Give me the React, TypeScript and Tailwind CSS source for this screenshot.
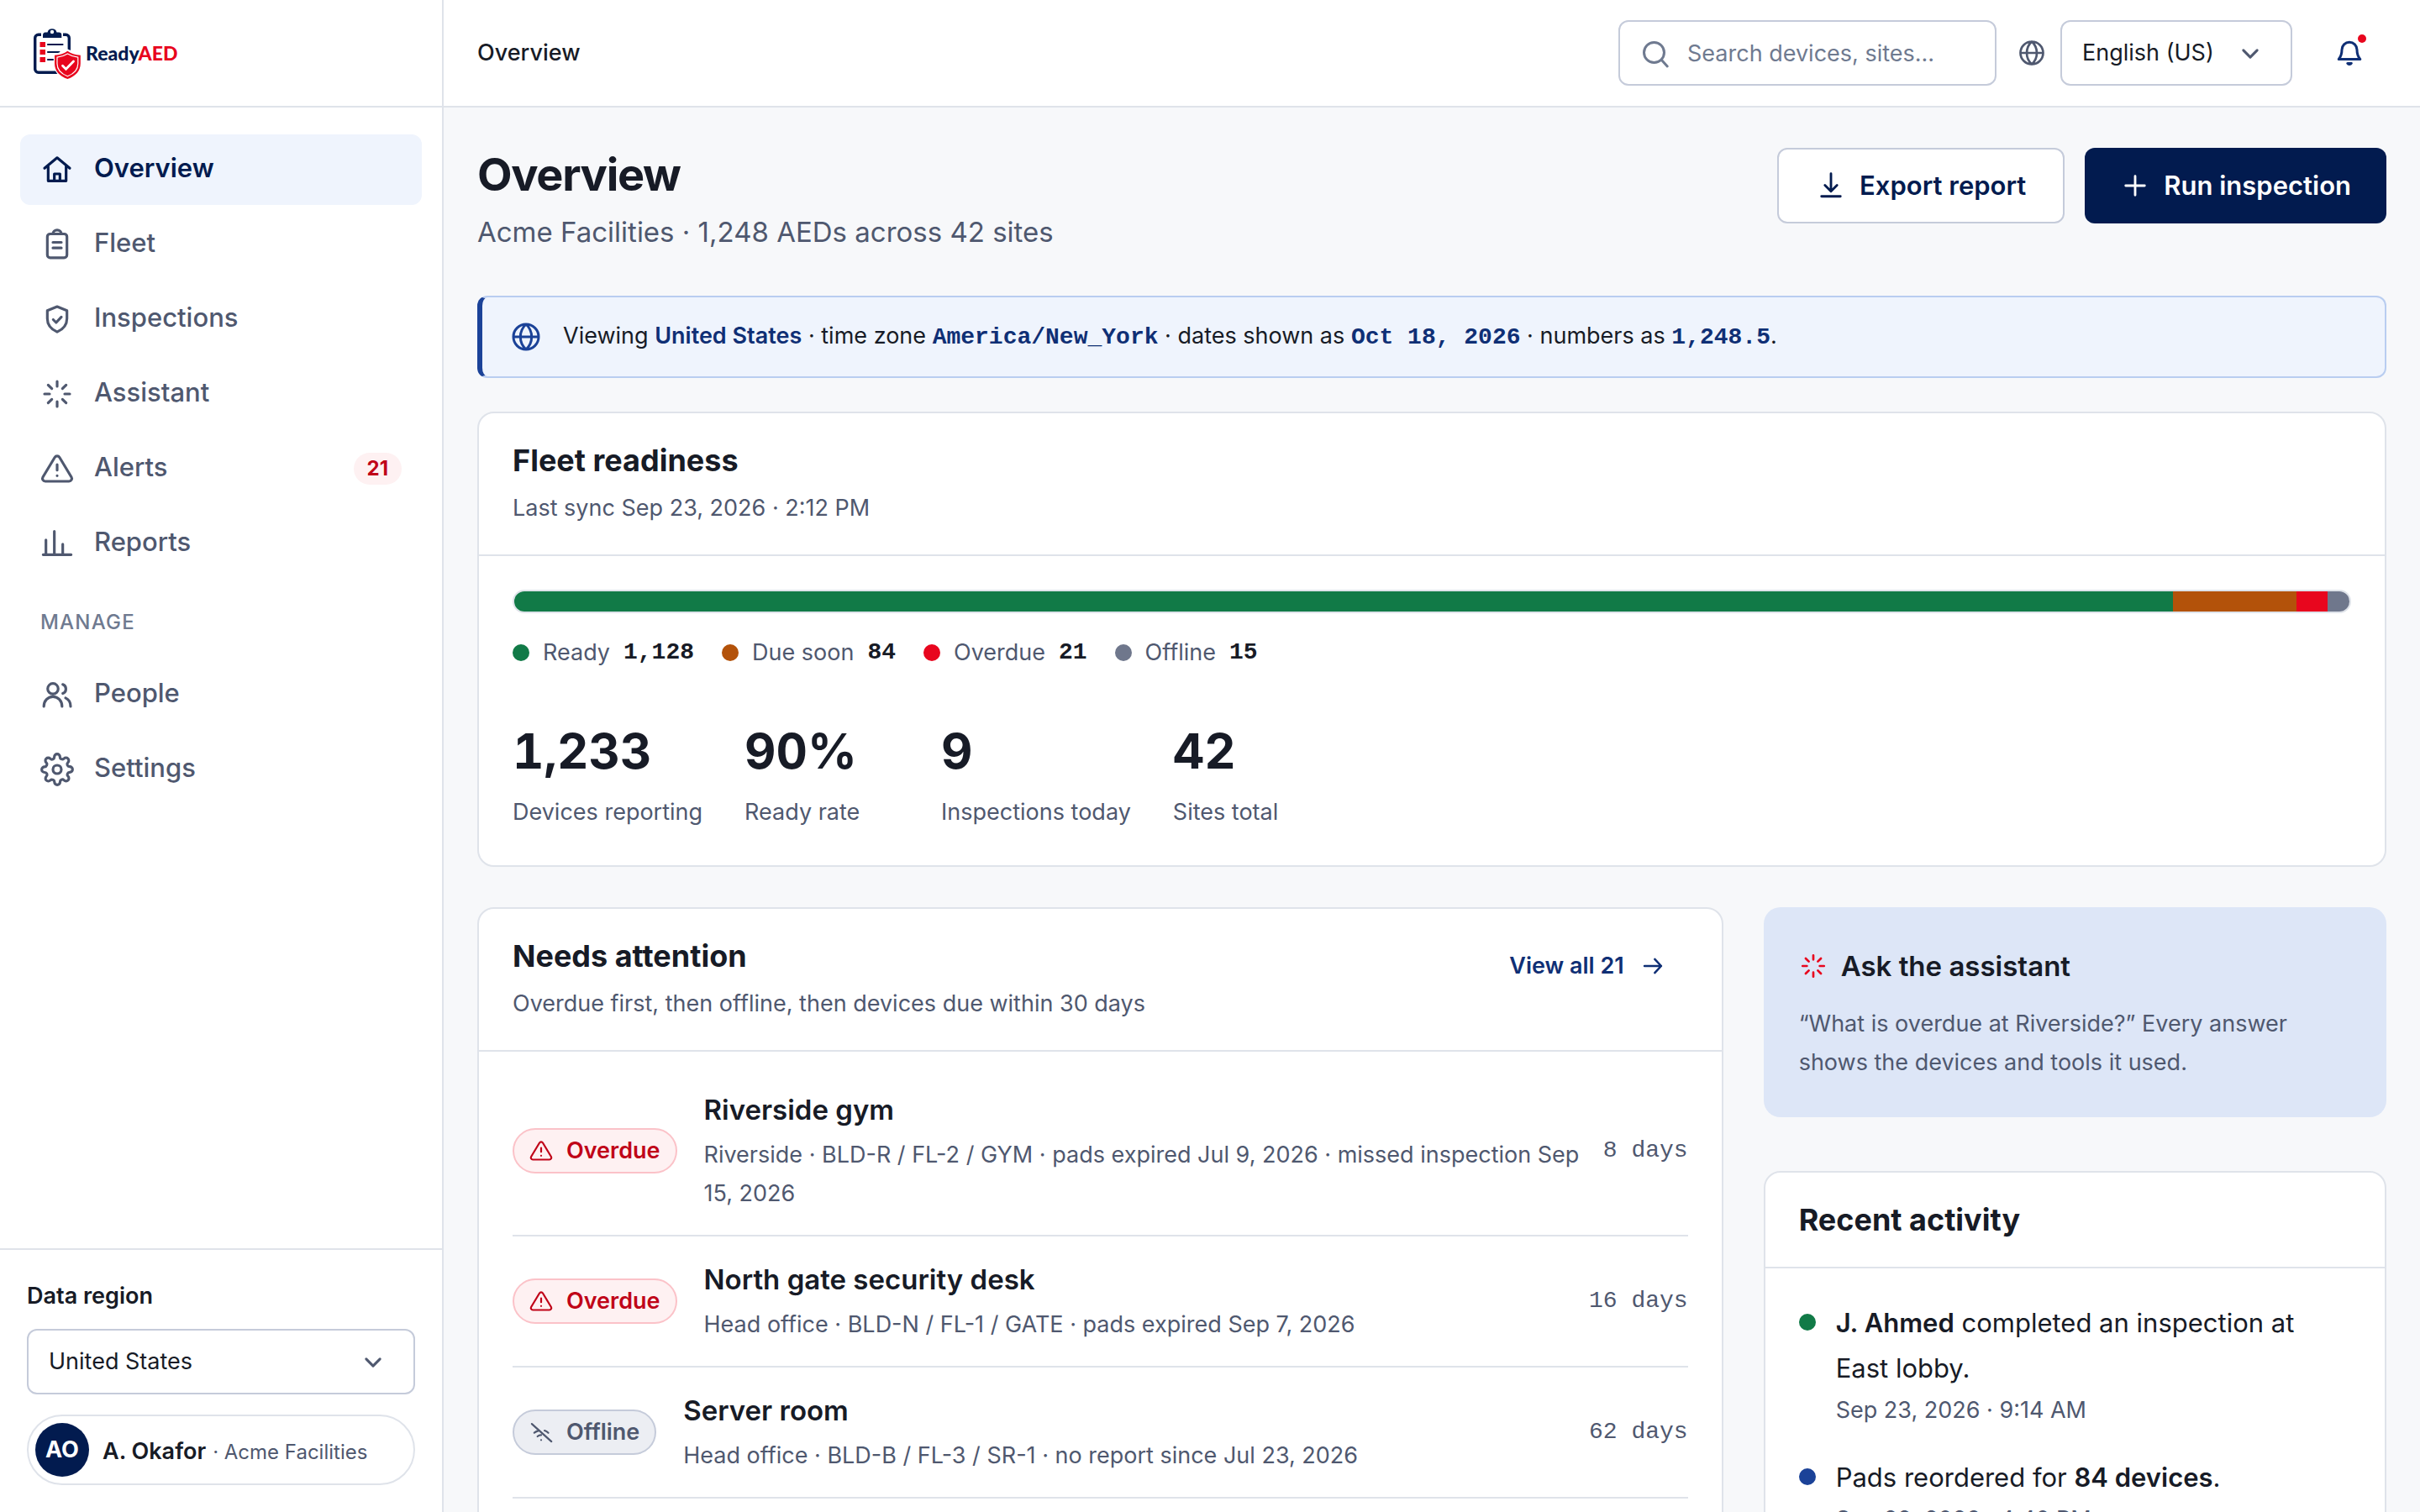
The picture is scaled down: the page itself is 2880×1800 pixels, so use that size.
import React from 'react';

const GEAR =
  'M19.4 15a1.65 1.65 0 0 0 .33 1.82l.06.06a2 2 0 0 1 0 2.83 2 2 0 0 1-2.83 0l-.06-.06a1.65 1.65 0 0 0-1.82-.33 1.65 1.65 0 0 0-1 1.51V21a2 2 0 0 1-2 2 2 2 0 0 1-2-2v-.09A1.65 1.65 0 0 0 9 19.4a1.65 1.65 0 0 0-1.82.33l-.06.06a2 2 0 0 1-2.83 0 2 2 0 0 1 0-2.83l.06-.06a1.65 1.65 0 0 0 .33-1.82 1.65 1.65 0 0 0-1.51-1H3a2 2 0 0 1-2-2 2 2 0 0 1 2-2h.09A1.65 1.65 0 0 0 4.6 9a1.65 1.65 0 0 0-.33-1.82l-.06-.06a2 2 0 0 1 0-2.83 2 2 0 0 1 2.83 0l.06.06a1.65 1.65 0 0 0 1.82.33H9a1.65 1.65 0 0 0 1-1.51V3a2 2 0 0 1 2-2 2 2 0 0 1 2 2v.09a1.65 1.65 0 0 0 1 1.51 1.65 1.65 0 0 0 1.82-.33l.06-.06a2 2 0 0 1 2.83 0 2 2 0 0 1 0 2.83l-.06.06a1.65 1.65 0 0 0-.33 1.82V9a1.65 1.65 0 0 0 1.51 1H21a2 2 0 0 1 2 2 2 2 0 0 1-2 2h-.09a1.65 1.65 0 0 0-1.51 1z';

const PATHS = {
  home: 'M3 11l9-7.5 9 7.5M5.6 9.5V20h12.8V9.5M10 20v-5h4v5',
  clipboard: 'M7 4.5h10a2 2 0 0 1 2 2v13a2 2 0 0 1-2 2H7a2 2 0 0 1-2-2v-13a2 2 0 0 1 2-2zM9 4.5a3 2.8 0 0 1 6 0M9 10.5h6M9 14.5h6',
  shield: 'M12 3l7 2.8v5.7c0 4.6-2.8 7.7-7 9.6-4.2-1.9-7-5-7-9.6V5.8zM9.2 12.3l2.1 2.1 3.7-4',
  spark: 'M12 3v3.6M12 17.4V21M3 12h3.6M17.4 12H21M5.6 5.6l2.6 2.6M15.8 15.8l2.6 2.6M5.6 18.4l2.6-2.6M15.8 8.2l2.6-2.6',
  alert: 'M10.3 3.9 1.8 18a2 2 0 0 0 1.7 3h17a2 2 0 0 0 1.7-3L13.7 3.9a2 2 0 0 0-3.4 0zM12 9v4M12 17h.01',
  chart: 'M2 20h20M4 20V9.5M10 20V3.3M16 20v-7.5',
  people: 'M9 4a3.6 3.6 0 1 1 0 7.5A3.6 3.6 0 1 1 9 4zM2.5 20.4c0-4 2.9-7 6.5-7s6.5 3 6.5 7M16 4.7a3.4 3.4 0 0 1 0 6.4M18 14.3c2.2 1 3.6 3.2 3.6 6.1',
  gear: 'M12 9a3 3 0 1 1 0 6 3 3 0 1 1 0-6z' + GEAR,
  search: 'M11 3a8 8 0 1 1 0 16 8 8 0 1 1 0-16zM17 17l4.5 5',
  globe: 'M12 3a9 9 0 1 1 0 18 9 9 0 1 1 0-18zM3 12h18M12 3c2.6 2.4 4 5.5 4 9s-1.4 6.6-4 9c-2.6-2.4-4-5.5-4-9s1.4-6.6 4-9z',
  bell: 'M6 9.5a6 6 0 0 1 12 0c0 4.2 1 5.7 2.5 7.5h-17C5 15.2 6 13.7 6 9.5zM10.5 20.3a1.6 1.2 0 0 0 3 0z',
  download: 'M12 2.5v14M7.2 11.7l4.8 4.8 4.8-4.8M4.5 20.5h15',
  plus: 'M12 4.5v15M4.5 12h15',
  arrow: 'M3.5 12h17M14 5l6.5 7-6.5 7',
  chevron: 'M5 8.5l7 7 7-7',
  offline: 'M2.5 3.5l20 18M5 12.6c1.3-1 2.8-1.8 4.5-2.2M15.5 10.3c1.5.5 2.8 1.3 3.8 2.3M8.3 16.3c1-.9 2.3-1.4 3.7-1.4M12 20h.01',
};

type IconProps = { name: keyof typeof PATHS; className?: string; stroke?: number };

const Icon: React.FC<IconProps> = ({ name, className = '', stroke = 1.9 }) => (
  <svg
    viewBox="0 0 24 24"
    fill="none"
    stroke="currentColor"
    strokeWidth={stroke}
    strokeLinecap="round"
    strokeLinejoin="round"
    className={`shrink-0 overflow-visible ${className}`}
    aria-hidden="true"
  >
    <path d={PATHS[name]} />
  </svg>
);

const Logo: React.FC = () => (
  <a href="#" className="flex items-center gap-[6px]">
    <svg viewBox="0 0 56 62" className="h-[62px] w-14" aria-hidden="true">
      <rect x="1.7" y="9.3" width="40.6" height="45" rx="4" fill="none" stroke="#021b4f" strokeWidth="3.4" />
      <path d="M9 6h26v8H9z" fill="#fff" />
      <path
        d="M14 6.5h2.5a5.7 5.7 0 0 1 11 0H30a3.3 3.3 0 0 1 3.3 3.3V13H11V9.8A3.3 3.3 0 0 1 14 6.5z"
        fill="#021b4f"
      />
      <circle cx="22" cy="6" r="2.2" fill="#fff" />
      <path d="M7.5 18H14v6H7.5zM7.5 27H14v6H7.5zM7.5 36H14v6H7.5z" fill="#e8061e" />
      <path d="M17 21h17.5M17 30h13.5M17 39h6" stroke="#021b4f" strokeWidth="2.2" strokeLinecap="round" />
      <path d="M40.4 26.5 57 33v11c0 9-6 16-16.6 20C29.8 60 24 53 24 44V33z" fill="#fff" />
      <path
        d="M40.4 28.7c4 3 9 4.6 15.4 5v9.8c0 9-6 15.3-15.4 18.5C31 58.8 25 52.5 25 43.5v-9.8c6.4-.4 11.4-2 15.4-5z"
        fill="#e8061e"
      />
      <path
        d="M40.4 32c3.6 2.3 7.6 3.7 12.4 4.2v7.5c0 7-4.6 12-12.4 15-7.8-3-12.4-8-12.4-15v-7.5c4.8-.5 8.8-1.9 12.4-4.2z"
        fill="none"
        stroke="#fff"
        strokeWidth="1.2"
      />
      <path d="M34.5 46.3l4 4L47.5 41" fill="none" stroke="#fff" strokeWidth="2.8" strokeLinecap="round" />
    </svg>
    <span className="font-[Lato] text-[23px] leading-none font-black text-[#021b4f]">
      Ready<span className="text-[#e8061e]">AED</span>
    </span>
  </a>
);

type NavItemProps = { icon: keyof typeof PATHS; label: string; active?: boolean; count?: number };

const NavItem: React.FC<NavItemProps> = ({ icon, label, active, count }) => (
  <a
    href="#"
    className={`flex h-[84px] items-center gap-6 rounded-xl px-6 text-[31px] ${
      active ? 'bg-[#eff4fd] font-semibold text-[#021b4f]' : 'font-medium text-[#4f586f]'
    }`}
  >
    <Icon name={icon} className="size-10" />
    <span className="flex-1 pb-1">{label}</span>
    {count && (
      <span className="flex h-[38px] items-center rounded-full bg-[#fef1f2] px-4 text-[24px] font-bold text-[#c00418]">
        {count}
      </span>
    )}
  </a>
);

const Sidebar: React.FC = () => (
  <aside className="flex w-[528px] shrink-0 flex-col border-r-2 border-[#dfe3ea] bg-white">
    <div className="flex h-32 shrink-0 items-center border-b-2 border-[#dfe3ea] px-10">
      <Logo />
    </div>
    <nav className="flex flex-1 flex-col gap-[5px] px-6 py-8">
      <NavItem icon="home" label="Overview" active />
      <NavItem icon="clipboard" label="Fleet" />
      <NavItem icon="shield" label="Inspections" />
      <NavItem icon="spark" label="Assistant" />
      <NavItem icon="alert" label="Alerts" count={21} />
      <NavItem icon="chart" label="Reports" />
      <p className="px-6 pt-6 pb-4 text-[24px] leading-[46px] font-medium tracking-wider text-[#6f7a90]">MANAGE</p>
      <NavItem icon="people" label="People" />
      <NavItem icon="gear" label="Settings" />
    </nav>
    <div className="flex flex-col border-t-2 border-[#dfe3ea] p-8">
      <label htmlFor="region" className="text-[27px] leading-[46px] font-semibold">
        Data region
      </label>
      <div className="relative mt-4">
        <select
          id="region"
          className="h-[78px] w-full appearance-none rounded-xl border-2 border-[#c5cbda] bg-white px-6 text-[27px]"
        >
          <option>United States</option>
        </select>
        <Icon name="chevron" className="absolute top-[26px] right-9 size-7 text-[#4f586f]" stroke={2.6} />
      </div>
      <button type="button" className="mt-6 flex h-[84px] items-center rounded-full border-2 border-[#dfe3ea] px-2">
        <span className="flex size-16 items-center justify-center rounded-full bg-[#021b4f] text-[27px] font-bold text-white">
          AO
        </span>
        <span className="ml-4 flex items-baseline gap-2 pt-1">
          <span className="text-[27px] font-semibold">A. Okafor</span>
          <span className="text-[24px] text-[#4f586f]">· Acme Facilities</span>
        </span>
      </button>
    </div>
  </aside>
);

const Topbar: React.FC = () => (
  <header className="flex h-32 shrink-0 items-center border-b-2 border-[#dfe3ea] bg-white px-10">
    <span className="flex-1 text-[27px] font-medium">Overview</span>
    <div className="relative">
      <Icon name="search" className="absolute top-[22px] left-[26px] size-9 text-[#6f7a90]" stroke={2} />
      <input
        type="search"
        aria-label="Search devices"
        placeholder="Search devices, sites..."
        className="h-[78px] w-[450px] rounded-xl border-2 border-[#c5cbda] bg-white pr-6 pl-20 text-[27px] placeholder:text-[#6f7a90]"
      />
    </div>
    <Icon name="globe" className="mr-4 ml-6 size-9 text-[#4f586f]" stroke={1.8} />
    <div className="relative">
      <select
        aria-label="Language"
        className="h-[78px] w-[276px] appearance-none rounded-xl border-2 border-[#c5cbda] bg-white px-6 text-[27px]"
      >
        <option>English (US)</option>
      </select>
      <Icon name="chevron" className="absolute top-[26px] right-9 size-7 text-[#4f586f]" stroke={2.6} />
    </div>
    <button type="button" aria-label="Notifications" className="relative ml-6 flex size-[88px] items-center justify-center">
      <Icon name="bell" className="size-9 text-[#0f2f75]" stroke={2} />
      <span className="absolute top-[22px] right-6 size-[10px] rounded-full bg-[#e8061e]"></span>
    </button>
  </header>
);

const Code: React.FC<{ children: React.ReactNode }> = ({ children }) => (
  <b className="font-['Liberation_Mono',monospace] text-[28px] font-bold text-[#0f2f75]">{children}</b>
);

type CardProps = { title: string; note?: string; action?: React.ReactNode; children: React.ReactNode };

const Card: React.FC<CardProps> = ({ title, note, action, children }) => (
  <section className="rounded-[20px] border-2 border-[#dfe3ea] bg-white">
    <div className="flex items-center justify-between border-b-2 border-[#dfe3ea] px-10 py-8">
      <div>
        <h2 className="text-[36px] leading-[48px] font-bold">{title}</h2>
        {note && <p className="mt-[10px] text-[27px] leading-[46px] text-[#4f586f]">{note}</p>}
      </div>
      {action}
    </div>
    {children}
  </section>
);

const SEGMENTS = [
  { label: 'Ready', value: 1128, color: 'bg-[#117a47]' },
  { label: 'Due soon', value: 84, color: 'bg-[#b3520a]' },
  { label: 'Overdue', value: 21, color: 'bg-[#e8061e]' },
  { label: 'Offline', value: 15, color: 'bg-[#6f778c]' },
];

const STATS = [
  { value: '1,233', label: 'Devices reporting' },
  { value: '90%', label: 'Ready rate' },
  { value: '9', label: 'Inspections today' },
  { value: '42', label: 'Sites total' },
];

const FleetReadiness: React.FC = () => (
  <Card title="Fleet readiness" note="Last sync Sep 23, 2026 · 2:12 PM">
    <div className="p-10">
      <div className="flex h-7 overflow-hidden rounded-full border-2 border-[#dfe3ea]">
        {SEGMENTS.map((s) => (
          <span key={s.label} className={s.color} style={{ width: `${(s.value / 1248) * 100}%` }}></span>
        ))}
      </div>
      <ul className="mt-6 flex gap-[33px] text-[27px] leading-[46px] text-[#4f586f]">
        {SEGMENTS.map((s) => (
          <li key={s.label} className="flex items-center gap-4">
            <span className={`size-5 rounded-full ${s.color}`}></span>
            {s.label}
            <b className="font-['Liberation_Mono',monospace] text-[28px] font-bold text-[#171b26]">
              {s.value.toLocaleString('en-US')}
            </b>
          </li>
        ))}
      </ul>
      <div className="mt-12 flex gap-[50px]">
        {STATS.map((s) => (
          <div key={s.label} className="min-w-[184px]">
            <p className="text-[58px] leading-[92px] font-bold tabular-nums">{s.value}</p>
            <p className="mt-1 text-[27px] leading-[46px] text-[#4f586f]">{s.label}</p>
          </div>
        ))}
      </div>
    </div>
  </Card>
);

const DEVICES = [
  {
    name: 'Riverside gym',
    detail: 'Riverside · BLD-R / FL-2 / GYM · pads expired Jul 9, 2026 · missed inspection Sep 15, 2026',
    age: '8 days',
    overdue: true,
  },
  {
    name: 'North gate security desk',
    detail: 'Head office · BLD-N / FL-1 / GATE · pads expired Sep 7, 2026',
    age: '16 days',
    overdue: true,
  },
  {
    name: 'Server room',
    detail: 'Head office · BLD-B / FL-3 / SR-1 · no report since Jul 23, 2026',
    age: '62 days',
    overdue: false,
  },
];

const StatusBadge: React.FC<{ overdue: boolean }> = ({ overdue }) => (
  <span
    className={`mr-2 flex h-[54px] shrink-0 items-center gap-4 rounded-full border-2 px-[18px] text-[27px] font-semibold ${
      overdue ? 'border-[#fbc2c8] bg-[#fef1f2] text-[#c00418]' : 'border-[#c5cbda] bg-[#eceef3] text-[#4f586f]'
    }`}
  >
    <Icon name={overdue ? 'alert' : 'offline'} className="size-7" />
    {overdue ? 'Overdue' : 'Offline'}
  </span>
);

const NeedsAttention: React.FC = () => (
  <Card
    title="Needs attention"
    note="Overdue first, then offline, then devices due within 30 days"
    action={
      <a href="#" className="mb-8 flex items-center gap-5 px-7 text-[27px] leading-[46px] font-semibold text-[#0f2f75]">
        View all 21
        <Icon name="arrow" className="size-7" stroke={2.2} />
      </a>
    }
  >
    <ul className="px-10 pt-[18px] pb-10">
      {DEVICES.map((d) => (
        <li key={d.name} className="flex items-center gap-6 border-b-2 border-[#dfe3ea] py-[26px]">
          <StatusBadge overdue={d.overdue} />
          <div className="min-w-0 flex-1">
            <h3 className="text-[33px] leading-[50px] font-semibold">{d.name}</h3>
            <p className="mt-[6px] text-[27px] leading-[46px] text-[#4f586f]">{d.detail}</p>
          </div>
          <span className="shrink-0 font-['Liberation_Mono',monospace] text-[28px] text-[#4f586f]">{d.age}</span>
        </li>
      ))}
    </ul>
  </Card>
);

type ActivityProps = { color: string; time: string; children: React.ReactNode };

const Activity: React.FC<ActivityProps> = ({ color, time, children }) => (
  <li className="flex gap-6">
    <span className={`mt-4 size-5 shrink-0 rounded-full ${color}`}></span>
    <div>
      <p className="text-[31px] leading-[54px]">{children}</p>
      <p className="text-[27px] leading-[46px] text-[#4f586f]">{time}</p>
    </div>
  </li>
);

const App: React.FC = () => {
  return (
    <div className="flex h-screen overflow-hidden bg-[#f7f8fa] font-[Inter,sans-serif] text-[#171b26]">
      <Sidebar />
      <div className="flex min-w-0 flex-1 flex-col">
        <Topbar />
        <main className="flex-1 overflow-hidden px-10 pt-12">
          <div className="flex items-start justify-between">
            <div>
              <h1 className="text-[54px] leading-[64px] font-bold tracking-tight">Overview</h1>
              <p className="mt-2 text-[33px] leading-[56px] text-[#4f586f]">
                Acme Facilities · 1,248 AEDs across 42 sites
              </p>
            </div>
            <div className="flex gap-6 text-[31px] font-semibold">
              <button
                type="button"
                className="flex h-[90px] items-center gap-4 rounded-xl border-2 border-[#c5cbda] bg-white px-11 text-[#021b4f]"
              >
                <Icon name="download" className="size-9" />
                Export report
              </button>
              <button type="button" className="flex h-[90px] items-center gap-4 rounded-xl bg-[#021b4f] px-[42px] text-white">
                <Icon name="plus" className="size-9" />
                Run inspection
              </button>
            </div>
          </div>

          <div className="mt-12 flex h-[98px] items-center gap-6 rounded-xl border-2 border-l-[6px] border-[#b9cdf0] border-l-[#1b4298] bg-[#eff4fd] px-8 text-[27px]">
            <Icon name="globe" className="size-10 text-[#1b4298]" stroke={1.8} />
            <p>
              Viewing <b className="font-semibold text-[#0f2f75]">United States</b> · time zone{' '}
              <Code>America/New_York</Code> · dates shown as <Code>Oct 18, 2026</Code> · numbers as{' '}
              <Code>1,248.5</Code>.
            </p>
          </div>

          <div className="mt-10">
            <FleetReadiness />
          </div>

          <div className="mt-12 grid grid-cols-[2fr_1fr] items-start gap-12">
            <NeedsAttention />
            <div className="flex flex-col gap-16">
              <section className="rounded-[20px] bg-[#dde6f7] p-[42px]">
                <div className="flex items-center gap-4">
                  <Icon name="spark" className="size-[34px] text-[#e8061e]" />
                  <h2 className="text-[33px] leading-[56px] font-semibold">Ask the assistant</h2>
                </div>
                <p className="mt-[18px] text-[27px] leading-[46px] text-[#4f586f]">
                  “What is overdue at Riverside?” Every answer shows the devices and tools it used.
                </p>
              </section>
              <Card title="Recent activity">
                <ul className="flex flex-col gap-[30px] px-10 pt-[38px] pb-10">
                  <Activity color="bg-[#117a47]" time="Sep 23, 2026 · 9:14 AM">
                    <b className="font-semibold">J. Ahmed</b> completed an inspection at East lobby.
                  </Activity>
                  <Activity color="bg-[#1b4298]" time="Sep 22, 2026 · 4:40 PM">
                    Pads reordered for <b className="font-semibold">84 devices</b>.
                  </Activity>
                </ul>
              </Card>
            </div>
          </div>
        </main>
      </div>
    </div>
  );
};

export default App;
